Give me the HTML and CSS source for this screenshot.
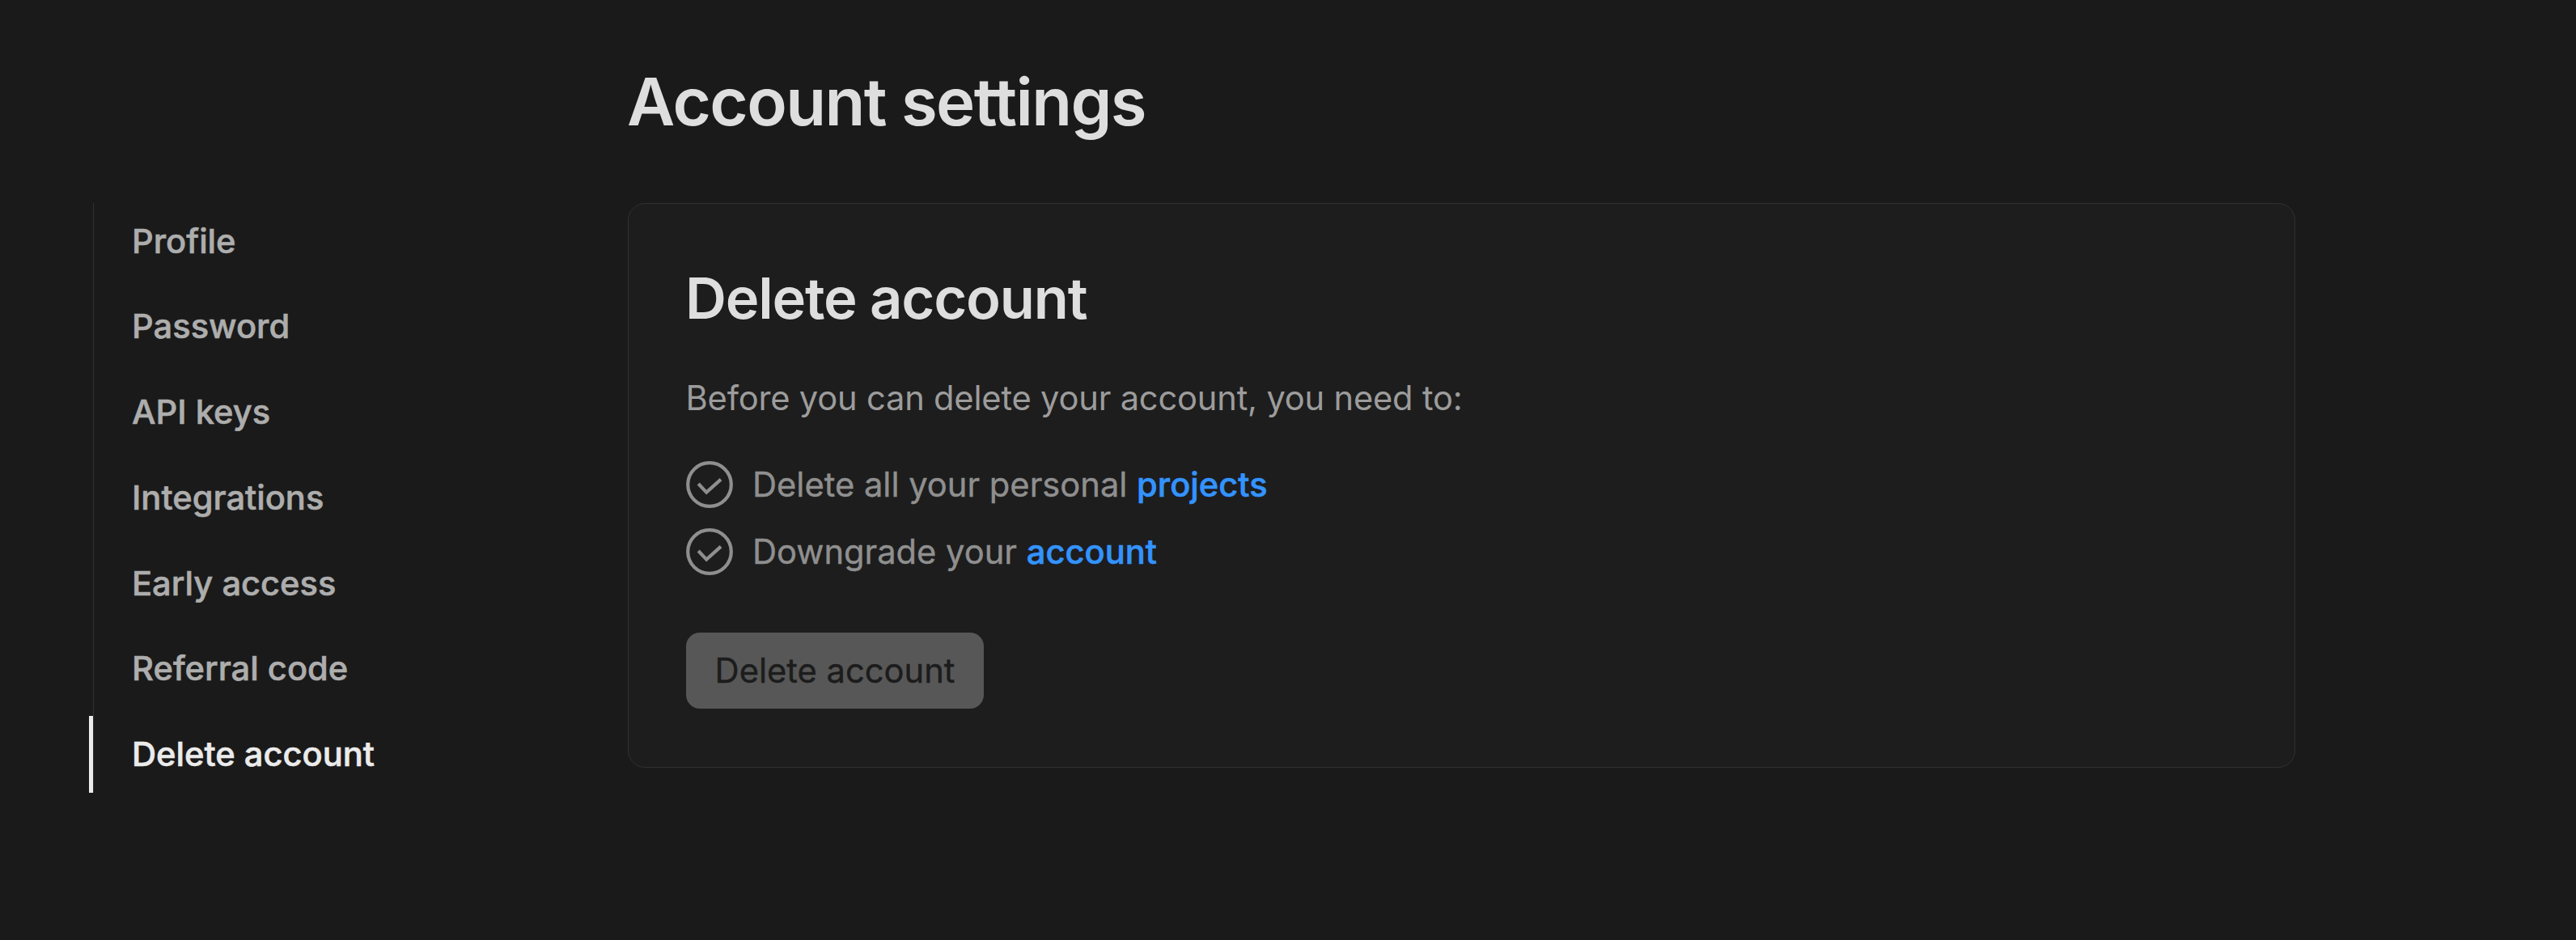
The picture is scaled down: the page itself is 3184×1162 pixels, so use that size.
FILE: index.html
```html
<!DOCTYPE html>
<html lang="en">
<head>
  <meta charset="utf-8">
  <title>Account settings</title>
  <link rel="stylesheet" href="styles.css">
</head>
<body>
  <div class="page">
    <nav class="side-nav">
      <a class="side-link">Profile</a>
      <a class="side-link">Password</a>
      <a class="side-link">API keys</a>
      <a class="side-link">Integrations</a>
      <a class="side-link">Early access</a>
      <a class="side-link">Referral code</a>
      <a class="side-link active">Delete account</a>
    </nav>
    <main class="content">
      <h1 class="page-title">Account settings</h1>
      <section class="card">
        <h2 class="card-title">Delete account</h2>
        <p class="intro">Before you can delete your account, you need to:</p>
        <ul class="steps">
          <li class="step">
            <svg class="step-icon" viewBox="0 0 58 58" fill="none" stroke="currentColor">
              <circle cx="29" cy="29" r="26.8" stroke-width="4.2"/>
              <path d="M15.2 28 25.2 38.6 43 22.6" stroke-width="4.2"/>
            </svg>
            <span>Delete all your personal <a class="link">projects</a></span>
          </li>
          <li class="step">
            <svg class="step-icon" viewBox="0 0 58 58" fill="none" stroke="currentColor">
              <circle cx="29" cy="29" r="26.8" stroke-width="4.2"/>
              <path d="M15.2 28 25.2 38.6 43 22.6" stroke-width="4.2"/>
            </svg>
            <span>Downgrade your <a class="link">account</a></span>
          </li>
        </ul>
        <button class="button" disabled>Delete account</button>
      </section>
    </main>
  </div>
</body>
</html>
```
FILE: styles.css
```css
* {
  box-sizing: border-box;
}

body {
  margin: 0;
  min-height: 1162px;
  background: #1a1a1a;
  color: #dedede;
  font-family: Inter, "Liberation Sans", sans-serif;
  font-size: 41.67px;
}

.page {
  display: grid;
  grid-template-columns: 661px 2061px;
  align-items: start;
  padding: 76px 0 0 115px;
}

.side-nav {
  display: flex;
  flex-direction: column;
  gap: 11px;
  margin-top: 174.5px;
}

.side-link {
  position: relative;
  height: 94.8px;
  padding-left: 47px;
  border-left: 1px solid #303030;
  color: #adadad;
  font-weight: 500;
  line-height: 94.4px;
  -webkit-text-stroke: 0.6px currentColor;
}

/* carries the rail across the gap between two items */
.side-link:not(.active)::after {
  content: "";
  position: absolute;
  left: -1px;
  top: 100%;
  width: 1px;
  height: 11px;
  background: #303030;
}

.side-link.active {
  color: #ebebeb;
}

.side-link.active::before {
  content: "";
  position: absolute;
  left: -6px;
  top: 0;
  width: 5px;
  height: 95px;
  background: #ebebeb;
}

.page-title {
  margin: 0 0 75px -1px;
  font-size: 81.5px;
  font-weight: 600;
  line-height: 100px;
  letter-spacing: -1.6px;
}

.card {
  display: flex;
  flex-direction: column;
  align-items: flex-start;
  height: 698px;
  padding: 73px 72px 72px 71px;
  border: 1px solid #303030;
  border-radius: 21px;
  background: #1d1d1d;
}

.card-title {
  margin: 0 0 49px -1px;
  font-size: 70.5px;
  font-weight: 600;
  line-height: 88px;
  height: 87px;
  letter-spacing: -1.2px;
}

.intro {
  margin: 0 0 47px -0.5px;
  color: #9c9c9c;
  font-weight: 400;
  line-height: 62.5px;
  height: 62px;
  letter-spacing: -0.2px;
}

.steps {
  display: flex;
  flex-direction: column;
  gap: 25.4px;
  margin: 0 0 71px;
  padding: 0;
  list-style: none;
}

.step {
  display: flex;
  align-items: center;
  gap: 24px;
  height: 58px;
  color: #8f8f8f;
  line-height: 58px;
  -webkit-text-stroke: 0.4px currentColor;
}

.step-icon {
  width: 58px;
  height: 58px;
}

.link {
  color: #3393ff;
  font-weight: 500;
  -webkit-text-stroke: 0.6px currentColor;
}

.button {
  width: 368px;
  height: 94px;
  padding: 0;
  border: 0;
  border-radius: 17px;
  background: #575757;
  color: #1c1c1c;
  font: inherit;
  line-height: 94px;
  -webkit-text-stroke: 0.4px currentColor;
}
```
